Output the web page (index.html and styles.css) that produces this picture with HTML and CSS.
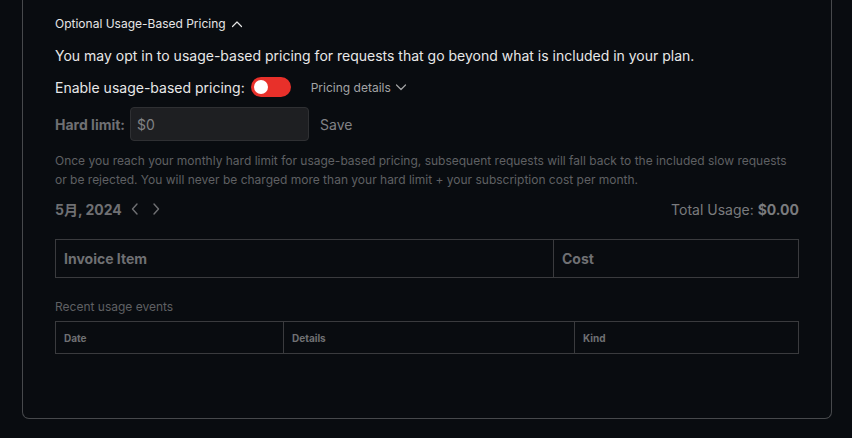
FILE: index.html
```html
<!DOCTYPE html>
<html>
<head>
<meta charset="utf-8">
<link rel="stylesheet" href="styles.css">
</head>
<body>
<div class="page">
  <section class="card">
    <div class="heading">
      <span>Optional Usage-Based Pricing</span>
      <svg class="chev-up" width="12" height="8" viewBox="0 0 12 8"><path d="M1.5 6.5 L6 2 L10.5 6.5" fill="none" stroke="#e6e6e6" stroke-width="1.2" stroke-linecap="round" stroke-linejoin="round"/></svg>
    </div>
    <p class="desc">You may opt in to usage-based pricing for requests that go beyond what is included in your plan.</p>
    <div class="enable-row">
      <span class="enable-label">Enable usage-based pricing:</span>
      <span class="toggle"><span class="knob"></span></span>
      <span class="details-link">Pricing details
        <svg width="12" height="8" viewBox="0 0 12 8"><path d="M1.5 2 L6 6.5 L10.5 2" fill="none" stroke="#a3a4a6" stroke-width="1.2" stroke-linecap="round" stroke-linejoin="round"/></svg>
      </span>
    </div>
    <div class="limit-row">
      <span class="limit-label">Hard limit:</span>
      <div class="limit-input">$0</div>
      <span class="save">Save</span>
    </div>
    <p class="note">Once you reach your monthly hard limit for usage-based pricing, subsequent requests will fall back to the included slow requests or be rejected. You will never be charged more than your hard limit + your subscription cost per month.</p>
    <div class="month-row">
      <div class="month">
        <span class="month-label">5月, 2024</span>
        <svg width="10" height="14" viewBox="0 0 10 14"><path d="M7 2 L2.5 7 L7 12" fill="none" stroke="#6f7073" stroke-width="1.4" stroke-linecap="round" stroke-linejoin="round"/></svg>
        <svg width="10" height="14" viewBox="0 0 10 14"><path d="M3 2 L7.5 7 L3 12" fill="none" stroke="#6f7073" stroke-width="1.4" stroke-linecap="round" stroke-linejoin="round"/></svg>
      </div>
      <div class="total">Total Usage: <b>$0.00</b></div>
    </div>
    <table class="invoice">
      <thead>
        <tr><th class="col-item">Invoice Item</th><th>Cost</th></tr>
      </thead>
    </table>
    <div class="recent">Recent usage events</div>
    <table class="events">
      <thead>
        <tr><th class="col-date">Date</th><th class="col-details">Details</th><th>Kind</th></tr>
      </thead>
    </table>
  </section>
</div>
</body>
</html>
```

FILE: styles.css
```css
* { box-sizing: border-box; }
html, body { margin: 0; padding: 0; }
body {
  background: #090c10;
  font-family: Inter, "Noto Sans CJK SC", sans-serif;
  color: #e6e6e6;
}
.page {
  padding: 0 20px 19px 22px;
}
.card {
  border: 1px solid #47494c;
  border-top: none;
  border-radius: 0 0 7px 7px;
  padding: 15px 32px 64px 32px;
}
.heading {
  display: flex;
  align-items: center;
  gap: 5px;
  font-size: 12px;
  line-height: 18px;
  color: #e6e6e6;
}
.desc {
  margin: 13px 0 0;
  font-size: 14px;
  line-height: 20px;
  color: #e8e8e8;
}
.enable-row {
  margin-top: 11px;
  display: flex;
  align-items: center;
  height: 20px;
}
.enable-label {
  font-size: 14px;
  color: #e8e8e8;
}
.toggle {
  margin-left: 6px;
  width: 40px;
  height: 20px;
  border-radius: 10px;
  background: #e8302a;
  display: flex;
  align-items: center;
  padding-left: 3px;
}
.knob {
  width: 14px;
  height: 14px;
  border-radius: 50%;
  background: #ffffff;
}
.details-link {
  margin-left: 20px;
  display: flex;
  align-items: center;
  gap: 4px;
  font-size: 12px;
  color: #a3a4a6;
}
.limit-row {
  margin-top: 10px;
  display: flex;
  align-items: center;
}
.limit-label {
  font-size: 14px;
  font-weight: 700;
  color: #6f7073;
}
.limit-input {
  margin-left: 5px;
  width: 179px;
  height: 34px;
  background: #1e1f22;
  border: 1px solid #2f3033;
  border-radius: 4px;
  padding: 0 6px;
  display: flex;
  align-items: center;
  font-size: 14px;
  color: #818285;
}
.save {
  margin-left: 11px;
  font-size: 14px;
  color: #818285;
}
.note {
  margin: 10px 0 0;
  font-size: 12px;
  line-height: 19px;
  color: #5f6063;
}
.month-row {
  margin-top: 10px;
  height: 20px;
  display: flex;
  align-items: center;
  justify-content: space-between;
}
.month {
  display: flex;
  align-items: center;
  gap: 11px;
}
.month-label {
  font-size: 14px;
  font-weight: 700;
  color: #6f7073;
  margin-right: -3px;
}
.total {
  font-size: 14px;
  color: #7a7b7e;
}
.total b { font-weight: 700; }
table {
  width: 100%;
  border-collapse: collapse;
}
th {
  text-align: left;
  border: 1px solid #3a3b3e;
  color: #6f7073;
  font-weight: 700;
}
.invoice {
  margin-top: 20px;
}
.invoice th {
  height: 38px;
  padding: 0 8px;
  font-size: 14px;
}
.col-item { width: 498px; }
.recent {
  margin-top: 21px;
  font-size: 12px;
  line-height: 16px;
  color: #5f6063;
}
.events {
  margin-top: 6px;
}
.events th {
  height: 32px;
  padding: 0 8px;
  font-size: 10px;
}
.col-date { width: 228px; }
.col-details { width: 291px; }
```
